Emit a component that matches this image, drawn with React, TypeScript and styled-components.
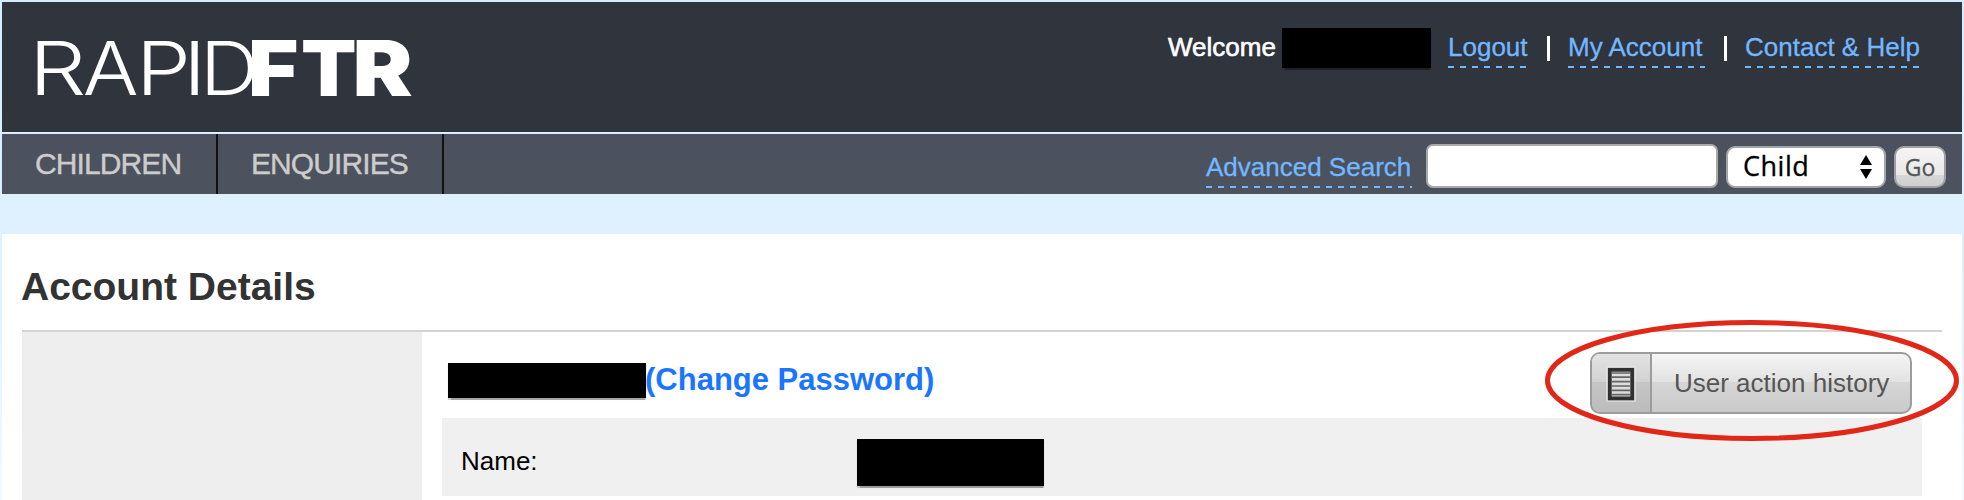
import React from "react";
import styled, { createGlobalStyle } from "styled-components";

const Global = createGlobalStyle`
  * { box-sizing: border-box; }
  body {
    margin: 0;
    background: #fff;
    font-family: "Liberation Sans", Arial, sans-serif;
  }
`;

const Page = styled.div`
  width: 1964px;
  height: 500px;
  overflow: hidden;
  padding: 2px 2px 0;
  background: linear-gradient(#d6ecff 0, #dff1ff 200px, #e0f2ff 300px, #f2faff 500px);
`;

const Header = styled.header`
  height: 130px;
  display: flex;
  justify-content: space-between;
  align-items: flex-start;
  background: #30343d;
`;

const Logo = styled.svg`
  display: block;
  width: 430px;
  height: 120px;
  margin: 5px 0 0 8px;
  fill: #fff;
  font-family: Inter, sans-serif;
`;

const UserLinks = styled.div`
  display: flex;
  align-items: flex-start;
  margin-right: 42px;
  padding-top: 26px;
  font-size: 26px;
  line-height: 38px;
  color: #fff;
`;

const Welcome = styled.span`
  width: 114px;
  -webkit-text-stroke: 0.6px #fff;
`;

const Redacted = styled.span<{ $w: number; $h: number }>`
  flex: none;
  width: ${(p) => p.$w}px;
  height: ${(p) => p.$h}px;
  background: #000;
  box-shadow: 0 1.5px 1px rgba(0, 0, 0, 0.35);
`;

const DashedLink = styled.a<{ $w: number }>`
  flex: none;
  width: ${(p) => p.$w}px;
  height: 40px;
  line-height: 38px;
  white-space: nowrap;
  font-size: 26px;
  color: #72b8ff;
  -webkit-text-stroke: 0.3px #72b8ff;
  text-decoration: none;
  background: repeating-linear-gradient(90deg, #72b8ff 0 6px, transparent 6px 12px) 0 100% / 100% 2px no-repeat;
`;

const LogoutLink = styled(DashedLink)`
  margin-left: 17px;
`;

const Divider = styled.span`
  width: 3px;
  height: 25px;
  margin: 8px 18px 0 19px;
  background: #fff;
`;

const NavBar = styled.nav`
  height: 60px;
  margin-top: 2px;
  display: flex;
  background: linear-gradient(#4c505e, #4c535e);
`;

const NavItem = styled.a<{ $w: number }>`
  width: ${(p) => p.$w}px;
  padding-left: 33px;
  border-right: 2px solid #111;
  font-size: 30px;
  line-height: 59px;
  letter-spacing: -0.9px;
  color: #ccc;
  -webkit-text-stroke: 0.4px #ccc;
`;

const SearchForm = styled.form`
  margin-left: auto;
  margin-right: 16px;
  display: flex;
  align-items: flex-start;
  padding-top: 10px;
`;

const SearchLink = styled(DashedLink)`
  margin: 4px 14px 0 0;
`;

const SearchInput = styled.input`
  width: 292px;
  height: 44px;
  padding: 0 8px;
  border: 2px solid #a9a9a9;
  border-radius: 7px;
  background: #fff;
`;

const TypeSelect = styled.div`
  display: flex;
  justify-content: space-between;
  align-items: center;
  width: 160px;
  height: 42px;
  margin: 2px 8px 0;
  padding: 0 12px 0 15px;
  border: 2px solid #a5a5a5;
  border-radius: 9px;
  background: #fff;
  font: 27px/36px "Open Sans", sans-serif;
  letter-spacing: 0.5px;
  -webkit-text-stroke: 0.3px #000;
`;

const SelectText = styled.span`
  height: 38px;
`;

const GoButton = styled.button`
  width: 52px;
  height: 42px;
  margin-top: 2px;
  padding: 0;
  border: 2px solid #a0a0a0;
  border-radius: 10px;
  background: linear-gradient(#f5f5f5, #e8e8e8 72%, #d6d6d6 72%, #cfcfcf);
  font: 23px/38px "Open Sans", sans-serif;
  color: #555;
  -webkit-text-stroke: 0.3px #555;
`;

const Content = styled.main`
  height: 266px;
  margin-top: 40px;
  padding: 0 20px;
  background: #fff;
`;

const Title = styled.h1`
  height: 98px;
  margin: 0;
  padding-top: 30px;
  border-bottom: 2px solid #d3d3d3;
  font-size: 39px;
  line-height: 46px;
  text-indent: -1px;
  color: #333;
`;

const Columns = styled.div`
  display: flex;
`;

const Sidebar = styled.aside`
  width: 400px;
  height: 168px;
  background: #eee;
`;

const Details = styled.section`
  width: 1480px;
  margin-left: 20px;
`;

const DetailsHead = styled.div`
  display: flex;
  align-items: flex-start;
  height: 86px;
  padding: 20px 10px 0 6px;
`;

const Password = styled.a`
  margin: 8px 0 0 -1px;
  font-size: 31px;
  font-weight: bold;
  line-height: 40px;
  color: #1b76ff;
  white-space: nowrap;
`;

const UserName = styled(Redacted)`
  margin-top: 11px;
`;

const HistoryButton = styled.button`
  position: relative;
  display: flex;
  width: 322px;
  height: 62px;
  margin-left: auto;
  padding: 0;
  border: 2px solid #9c9c9c;
  border-radius: 10px;
  background: linear-gradient(#f5f5f5, #e2e2e2 48%, #d6d6d6 48%, #cacaca);
  font: 26px/58px "Liberation Sans", Arial, sans-serif;
  color: #555;
`;

const IconCell = styled.span`
  display: flex;
  width: 60px;
  height: 58px;
  padding: 12px 0 0 14px;
  border-right: 2px solid #9c9c9c;
  border-radius: 8px 0 0 8px;
  background: linear-gradient(#e3e3e3, #d2d2d2 48%, #c6c6c6 48%, #bcbcbc);
`;

const Label = styled.span`
  padding-left: 22px;
  white-space: nowrap;
`;

const Highlight = styled.svg`
  position: absolute;
  left: -49px;
  top: -35px;
  width: 418px;
  height: 125px;
  pointer-events: none;
`;

const Row = styled.div`
  display: flex;
  height: 78px;
  padding: 21px 0 0 19px;
  background: #f0f0f0;
`;

const RowLabel = styled.span`
  width: 396px;
  font-size: 26px;
  line-height: 44px;
  color: #000;
`;

const logoLetters = [
  { char: "R", x: 19, stretch: 1.22 },
  { char: "A", x: 72.8, stretch: 1.12 },
  { char: "P", x: 126, stretch: 1.18 },
  { char: "I", x: 173, stretch: 1.2 },
  { char: "D", x: 190, stretch: 1.1 },
  { char: "F", x: 238, stretch: 1.12, heavy: true },
  { char: "T", x: 291, stretch: 1.05, heavy: true },
  { char: "R", x: 342.5, stretch: 1.17, heavy: true },
];

function ListIcon() {
  return (
    <svg width="30" height="36" viewBox="0 0 30 36">
      <rect width="30" height="36" rx="1" fill="#e6e6e6" opacity="0.6" />
      <rect x="3.8" y="3.8" width="22.4" height="28.6" fill="#dcdcdc" stroke="#303030" strokeWidth="3.8" />
      <path d="M5.5 7h19M5.5 11.2h19M5.5 15.6h19M5.5 20h19M5.5 24.4h19M5.5 28.6h19" stroke="#666" strokeWidth="1.7" />
    </svg>
  );
}

export default function App() {
  return (
    <Page>
      <Global />
      <Header>
        <Logo viewBox="0 0 430 120">
          {logoLetters.map((l, i) => (
            <text
              key={i}
              transform={`translate(${l.x} ${l.heavy ? 89 : 88}) scale(${l.stretch} 1)`}
              fontSize={l.heavy ? 77 : 74}
              fontWeight={l.heavy ? 900 : 300}
            >
              {l.char}
            </text>
          ))}
        </Logo>
        <UserLinks>
          <Welcome>Welcome</Welcome>
          <Redacted $w={149} $h={40} />
          <LogoutLink $w={80}>Logout</LogoutLink>
          <Divider />
          <DashedLink $w={137}>My Account</DashedLink>
          <Divider />
          <DashedLink $w={175}>Contact &amp; Help</DashedLink>
        </UserLinks>
      </Header>
      <NavBar>
        <NavItem $w={216}>CHILDREN</NavItem>
        <NavItem $w={226}>ENQUIRIES</NavItem>
        <SearchForm>
          <SearchLink $w={206}>Advanced Search</SearchLink>
          <SearchInput />
          <TypeSelect>
            <SelectText>Child</SelectText>
            <svg width="12" height="24" viewBox="0 0 12 24">
              <path d="M0 10 6 0l6 10zM0 14h12L6 24z" />
            </svg>
          </TypeSelect>
          <GoButton type="button">Go</GoButton>
        </SearchForm>
      </NavBar>
      <Content>
        <Title>Account Details</Title>
        <Columns>
          <Sidebar />
          <Details>
            <DetailsHead>
              <UserName $w={198} $h={35} />
              <Password>(Change Password)</Password>
              <HistoryButton>
                <IconCell>
                  <ListIcon />
                </IconCell>
                <Label>User action history</Label>
                <Highlight viewBox="0 0 418 125">
                  <ellipse cx="209" cy="61.5" rx="204.5" ry="58" fill="none" stroke="#e12717" strokeWidth="5" />
                </Highlight>
              </HistoryButton>
            </DetailsHead>
            <Row>
              <RowLabel>Name:</RowLabel>
              <Redacted $w={187} $h={47} />
            </Row>
          </Details>
        </Columns>
      </Content>
    </Page>
  );
}
